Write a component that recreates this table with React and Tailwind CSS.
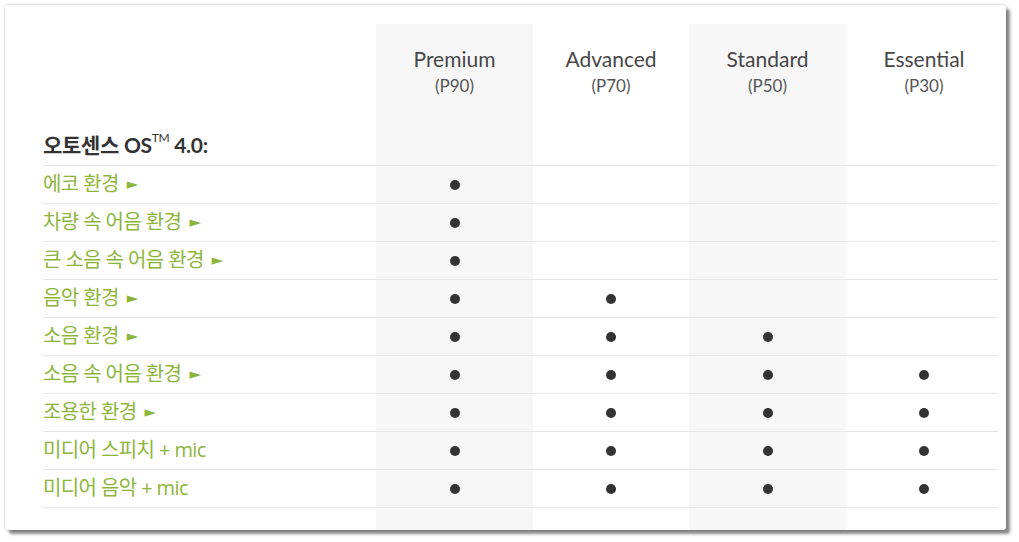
import React from "react";

const rows = [
  { label: "에코 환경", arrow: true, on: [1, 0, 0, 0] },
  { label: "차량 속 어음 환경", arrow: true, on: [1, 0, 0, 0] },
  { label: "큰 소음 속 어음 환경", arrow: true, on: [1, 0, 0, 0] },
  { label: "음악 환경", arrow: true, on: [1, 1, 0, 0] },
  { label: "소음 환경", arrow: true, on: [1, 1, 1, 0] },
  { label: "소음 속 어음 환경", arrow: true, on: [1, 1, 1, 1] },
  { label: "조용한 환경", arrow: true, on: [1, 1, 1, 1] },
  { label: "미디어 스피치 + mic", arrow: false, on: [1, 1, 1, 1] },
  { label: "미디어 음악 + mic", arrow: false, on: [1, 1, 1, 1] },
];

const plans = [
  { name: "Premium", code: "(P90)", shaded: true, w: "w-[157px]" },
  { name: "Advanced", code: "(P70)", shaded: false, w: "w-[156px]" },
  { name: "Standard", code: "(P50)", shaded: true, w: "w-[157px]" },
  { name: "Essential", code: "(P30)", shaded: false, w: "w-[156px]" },
];

function PlanColumn({ plan, index, last }) {
  const cell = last ? "mr-[4px] pl-[4px]" : "";
  return (
    <div className={`flex flex-col ${plan.w} pb-[12px] ${plan.shaded ? "bg-[#f7f7f7]" : ""}`}>
      <div className="h-[104px] flex flex-col items-center pt-[20px]">
        <div className="text-[21px] leading-[30px] text-[#474747]">{plan.name}</div>
        <div className="text-[17px] leading-[24px] text-[#555]">{plan.code}</div>
      </div>
      <div className={`h-[38px] border-b border-[#e6e6e6] ${last ? "mr-[4px]" : ""}`} />
      {rows.map((r) => (
        <div
          key={r.label}
          className={`h-[38px] border-b border-[#e6e6e6] flex items-center justify-center ${cell}`}
        >
          {r.on[index] ? <span className="w-[10px] h-[10px] rounded-full bg-[#333]" /> : null}
        </div>
      ))}
    </div>
  );
}

export default function App() {
  return (
    <div className="w-[1019px] h-[542px] bg-white pt-[5px] pl-[5px]" style={{ fontFamily: 'Lato, "Noto Sans CJK KR", sans-serif' }}>
      <div className="w-[1001px] h-[525px] bg-white rounded-[3px] shadow-[0_0_3px_rgba(0,0,0,0.3),4px_4px_3px_rgba(0,0,0,0.45)] pt-[19px] pl-[38px] flex">
        <div className="w-[333px] flex flex-col">
          <div className="h-[104px]" />
          <div className="h-[38px] border-b border-[#e6e6e6] flex items-center pb-[3px] text-[21px] font-bold text-[#333] tracking-[-0.3px]">
            오토센스 OS<sup className="text-[12px] font-normal -top-[7px]">TM</sup>&nbsp;4.0:
          </div>
          {rows.map((r) => (
            <div
              key={r.label}
              className="h-[38px] border-b border-[#e6e6e6] flex items-center pb-[1px] text-[20px] text-[#8db53c] tracking-[-0.6px]"
              style={{ fontFamily: '"Open Sans", "Noto Sans CJK KR", sans-serif' }}
            >
              {r.label}
              {r.arrow && <span className="ml-[8px] text-[15px]" style={{ fontFamily: '"DejaVu Sans", sans-serif' }}>►</span>}
            </div>
          ))}
        </div>
        {plans.map((p, i) => (
          <PlanColumn key={p.name} plan={p} index={i} last={i === plans.length - 1} />
        ))}
      </div>
    </div>
  );
}
